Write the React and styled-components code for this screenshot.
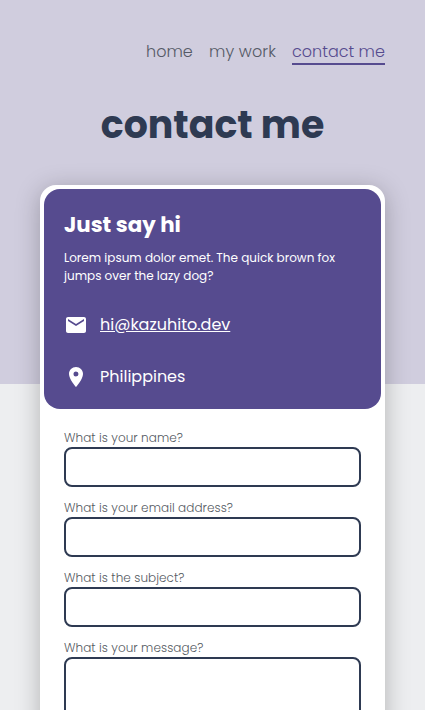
import React from "react";
import styled, { createGlobalStyle } from "styled-components";

const GlobalStyle = createGlobalStyle`
  *, *::before, *::after { box-sizing: border-box; }
  html, body { margin: 0; height: 710px; overflow: hidden; }
  body { background: #edeef0; font-family: Poppins, Inter, sans-serif; color: #2e3a52; }
`;

const Page = styled.div`
  height: 710px;
  overflow: hidden;
  background: linear-gradient(#d0cdde 0 384px, #edeef0 384px);
`;

const Nav = styled.nav`
  display: flex;
  justify-content: flex-end;
  gap: 16px;
  padding: 40px 40px 0;
`;

const NavLink = styled.a`
  height: 25px;
  width: ${(p) => p.$width}px;
  font-size: 16px;
  line-height: 24px;
  font-weight: 300;
  white-space: nowrap;
  letter-spacing: ${(p) => p.$spacing || 0}px;
  color: ${(p) => (p.$active ? "#564b8f" : "#555a66")};
  border-bottom: 2px solid ${(p) => (p.$active ? "#564b8f" : "transparent")};
`;

const Title = styled.h1`
  margin: 30px 0 0;
  height: 60px;
  font-size: 37.9px;
  line-height: 59px;
  font-weight: 700;
  text-align: center;
  white-space: nowrap;
`;

const Card = styled.main`
  margin: 30px 40px 0;
  padding: 4px;
  height: 620px;
  border-radius: 16px;
  background: #fff;
  box-shadow: 0 4px 24px rgba(0, 0, 0, 0.25);
`;

const Intro = styled.section`
  height: 220px;
  padding: 20px;
  border-radius: 16px;
  background: #564b8f;
  color: #fff;
`;

const Heading = styled.h2`
  margin: 0;
  font-size: 21.33px;
  line-height: 32px;
  font-weight: 700;
`;

const Lead = styled.p`
  margin: 8px 0 0;
  font-size: 12px;
  line-height: 18px;
  font-weight: 400;
  white-space: nowrap;
`;

const Contact = styled.div`
  display: flex;
  align-items: center;
  gap: 12px;
  height: 24px;
  margin-top: 28px;
  font-size: 16px;
  line-height: 22px;
  font-weight: 400;
`;

const Icon = styled.svg`
  width: 24px;
  height: 24px;
  fill: #fff;
`;

const MailLink = styled.a`
  text-decoration: underline;
`;

const Form = styled.form`
  padding: 20px 20px 0;
`;

const Field = styled.label`
  display: block;
  height: 70px;
  font-size: 12px;
  line-height: 18px;
  font-weight: 300;
  letter-spacing: 0.06px;
  color: #555a62;
`;

const Input = styled.input`
  display: block;
  width: 100%;
  height: 40px;
  border: 2px solid #2e3a52;
  border-radius: 8px;
  background: #fff;
`;

const Message = styled(Input).attrs({ as: "textarea" })`
  height: 120px;
  resize: none;
`;

export default function App() {
  return (
    <Page>
      <GlobalStyle />
      <Nav>
        <NavLink $width={47}>home</NavLink>
        <NavLink $width={67} $spacing={0.1}>my work</NavLink>
        <NavLink $width={93} $active>contact me</NavLink>
      </Nav>
      <Title>contact me</Title>
      <Card>
        <Intro>
          <Heading>Just say hi</Heading>
          <Lead>Lorem ipsum dolor emet. The quick brown fox<br />jumps over the lazy dog?</Lead>
          <Contact>
            <Icon viewBox="0 0 24 24"><path d="M20 4H4c-1.1 0-2 .9-2 2v12c0 1.1.9 2 2 2h16c1.1 0 2-.9 2-2V6c0-1.1-.9-2-2-2zm0 4-8 5-8-5V6l8 5 8-5v2z" /></Icon>
            <MailLink>hi@kazuhito.dev</MailLink>
          </Contact>
          <Contact>
            <Icon viewBox="0 0 24 24"><path d="M12 2C8.13 2 5 5.13 5 9c0 5.25 7 13 7 13s7-7.75 7-13c0-3.87-3.13-7-7-7zm0 9.5a2.5 2.5 0 1 1 0-5 2.5 2.5 0 0 1 0 5z" /></Icon>
            <span>Philippines</span>
          </Contact>
        </Intro>
        <Form>
          <Field>What is your name?<Input /></Field>
          <Field>What is your email address?<Input /></Field>
          <Field>What is the subject?<Input /></Field>
          <Field>What is your message?<Message /></Field>
        </Form>
      </Card>
    </Page>
  );
}
